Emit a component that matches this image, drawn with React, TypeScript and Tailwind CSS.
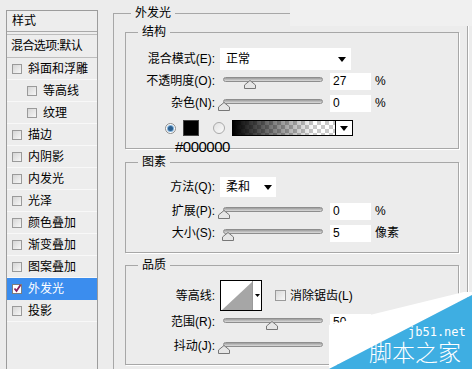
import React from 'react';

const sideItems = [
  { label: '斜面和浮雕', indent: false },
  { label: '等高线', indent: true },
  { label: '纹理', indent: true },
  { label: '描边', indent: false },
  { label: '内阴影', indent: false },
  { label: '内发光', indent: false },
  { label: '光泽', indent: false },
  { label: '颜色叠加', indent: false },
  { label: '渐变叠加', indent: false },
  { label: '图案叠加', indent: false },
  { label: '外发光', indent: false, active: true },
  { label: '投影', indent: false },
];

const DownArrow = ({ w = 8, h = 5 }: { w?: number; h?: number }) => (
  <svg width={w} height={h} viewBox={`0 0 ${w} ${h}`}>
    <path d={`M0 0H${w}L${w / 2} ${h}Z`} fill="#000" />
  </svg>
);

const Check = ({ checked = false }: { checked?: boolean }) => (
  <span
    className={`relative flex h-[10px] w-[10px] shrink-0 items-center justify-center border ${
      checked ? 'border-[#7d7d7d] bg-white' : 'border-[#9a9a9a] bg-gradient-to-br from-[#d6d6d6] to-[#f7f7f7]'
    }`}
  >
    {checked && (
      <svg width="9" height="9" viewBox="0 0 9 9" className="absolute -top-[1px] left-0">
        <path d="M1.5 4.5L3.5 7L7.5 1" fill="none" stroke="#8a1f5c" strokeWidth="1.8" />
      </svg>
    )}
  </span>
);

const Slider = ({ value }: { value: number }) => (
  <div className="relative ml-[3px] h-[22px] w-[112px] shrink-0">
    <div className="absolute left-[5px] top-[7px] h-[5px] w-[100px] rounded-full border border-[#8e8e8e] bg-gradient-to-b from-[#9c9c9c] to-[#dcdcdc]" />
    <svg className="absolute top-[10px]" style={{ left: value }} width="12" height="9" viewBox="0 0 12 9">
      <path d="M0.5 8.5V5L6 0.5L11.5 5V8.5Z" fill="#e6e6e6" stroke="#777" />
    </svg>
  </div>
);

const Num = ({ v }: { v: string }) => (
  <div className="h-[17px] w-[41px] shrink-0 bg-white pl-[3px] leading-[17px]">{v}</div>
);

const Label = ({ children }: { children: React.ReactNode }) => (
  <div className="w-[89px] shrink-0 text-right">{children}</div>
);

const SliderRow = ({ label, value, num, unit, className = '' }: { label: string; value: number; num: string; unit?: string; className?: string }) => (
  <div className={`flex h-[22px] items-center ${className}`}>
    <Label>{label}</Label>
    <Slider value={value} />
    <Num v={num} />
    {unit && <span className="ml-[4px]">{unit}</span>}
  </div>
);

const Group = ({ title, className = '', children }: { title: string; className?: string; children: React.ReactNode }) => (
  <fieldset className={`ml-[11px] w-[334px] border border-[#a7a7a7] shadow-[1px_1px_0_#fff] ${className}`}>
    <legend className="ml-[12px] px-[4px] leading-[16px]">{title}</legend>
    {children}
  </fieldset>
);

export default function App() {
  return (
    <div className="relative flex h-[369px] w-[472px] overflow-hidden bg-[#ececec] font-['Liberation_Sans','Noto_Sans_CJK_SC',sans-serif] text-[12px] leading-[16px] text-black">
      {/* styles list */}
      <div className="ml-[6px] mt-[10px] h-[400px] w-[92px] shrink-0 border border-[#9c9c9c] bg-[#ededed]">
        <div className="flex h-[21px] items-center border-b border-[#a9a9a9] pl-[5px]">样式</div>
        <div className="mt-[2px] flex h-[24px] items-center border-y border-[#bdbdbd] pl-[4px] tracking-[-0.6px]">混合选项:默认</div>
        {sideItems.map((it) => (
          <div
            key={it.label}
            className={`flex h-[22px] items-center gap-[6px] border-b ${
              it.active ? 'border-[#3b8dee] bg-[#3b8dee] text-white' : 'border-[#f8f8f8]'
            } ${it.indent ? 'pl-[20px]' : 'pl-[5px]'}`}
          >
            <Check checked={it.active} />
            <span>{it.label}</span>
          </div>
        ))}
      </div>

      {/* outer glow settings */}
      <fieldset className="ml-[15px] mt-[5px] h-[420px] w-[355px] shrink-0 self-start border border-[#a7a7a7] shadow-[1px_1px_0_#fff]">
        <legend className="ml-[17px] px-[4px] leading-[16px]">外发光</legend>

        <Group title="结构" className="mt-[3px] pb-[12px]">
          <div className="mt-[8px] flex h-[22px] items-center">
            <Label>混合模式(E):</Label>
            <div className="ml-[5px] flex h-[22px] w-[131px] items-center justify-between bg-white pl-[6px] pr-[5px]">
              <span>正常</span>
              <DownArrow />
            </div>
          </div>
          <SliderRow label="不透明度(O):" value={26} num="27" unit="%" />
          <SliderRow label="杂色(N):" value={0} num="0" unit="%" />
          <div className="relative mt-[6px] flex h-[16px] items-center pl-[39px]">
            <span className="flex h-[11px] w-[11px] items-center justify-center rounded-full border border-[#8c8c8c] bg-white">
              <span className="h-[5px] w-[5px] rounded-full bg-[#2d5f8e] shadow-[0_0_0_1px_#7fb0da]" />
            </span>
            <span className="ml-[7px] h-[16px] w-[16px] border border-[#444] bg-black" />
            <span className="ml-[14px] h-[12px] w-[12px] rounded-full border border-[#a9a9a9] bg-gradient-to-br from-[#e2e2e2] to-[#fafafa]" />
            <div className="ml-[7px] flex h-[16px] w-[121px] border border-black">
              <div className="flex-1 [background-image:linear-gradient(to_right,#000,rgba(0,0,0,0)_80%),repeating-conic-gradient(#c9c9c9_0_25%,#fff_0_50%)] [background-size:100%_100%,8px_8px]" />
              <div className="flex w-[17px] items-center justify-center border-l border-black bg-white">
                <DownArrow />
              </div>
            </div>
            <span className="absolute left-[49px] top-[18px] text-[15px] leading-[18px] tracking-[-0.5px]">#000000</span>
          </div>
        </Group>

        <Group title="图素" className="mt-[5px] pb-[8px]">
          <div className="mt-[7px] flex h-[20px] items-center">
            <Label>方法(Q):</Label>
            <div className="ml-[5px] flex h-[20px] w-[56px] items-center justify-between bg-white pl-[6px] pr-[4px]">
              <span>柔和</span>
              <DownArrow />
            </div>
          </div>
          <SliderRow label="扩展(P):" value={0} num="0" unit="%" className="mt-[3px]" />
          <SliderRow label="大小(S):" value={4} num="5" unit="像素" />
        </Group>

        <Group title="品质" className="mt-[4px] pb-[7px]">
          <div className="mt-[7px] flex h-[31px] items-center">
            <Label>等高线:</Label>
            <div className="ml-[5px] flex h-[31px] w-[42px] border border-black bg-white">
              <svg width="31" height="29" viewBox="0 0 31 29">
                <path d="M1 29L31 1V29Z" fill="#a6a6a6" />
              </svg>
              <div className="flex flex-1 items-center justify-center border-l border-[#9a9a9a]">
                <DownArrow w={5} h={3} />
              </div>
            </div>
            <span className="ml-[13px] h-[11px] w-[11px] border border-[#9a9a9a] bg-gradient-to-br from-[#d9d9d9] to-[#f7f7f7]" />
            <span className="ml-[4px]">消除锯齿(L)</span>
          </div>
          <SliderRow label="范围(R):" value={48} num="50" />
          <SliderRow label="抖动(J):" value={0} num="0" className="mt-[2px]" />
        </Group>
      </fieldset>

      {/* lighter strip at the cropped top-right edge */}
      <div className="absolute left-[290px] top-0 h-[26px] w-[182px] bg-[#f0f0f0]" />

      {/* watermark */}
      <svg className="absolute bottom-0 right-0" width="143" height="77" viewBox="0 0 143 77">
        <path d="M0 33L143 -2V3L0 77Z" fill="#fff" />
        <path d="M143 3V77H0Z" fill="#3eaee2" />
      </svg>
      <span className="absolute left-[408px] top-[326px] font-['DejaVu_Sans_Mono',monospace] text-[12px] leading-[12px] text-white">jb51.net</span>
      <span className="absolute left-[369px] top-[339px] font-['Noto_Sans_CJK_SC',sans-serif] text-[23px] font-light leading-[24px] text-white">脚本之家</span>
    </div>
  );
}
